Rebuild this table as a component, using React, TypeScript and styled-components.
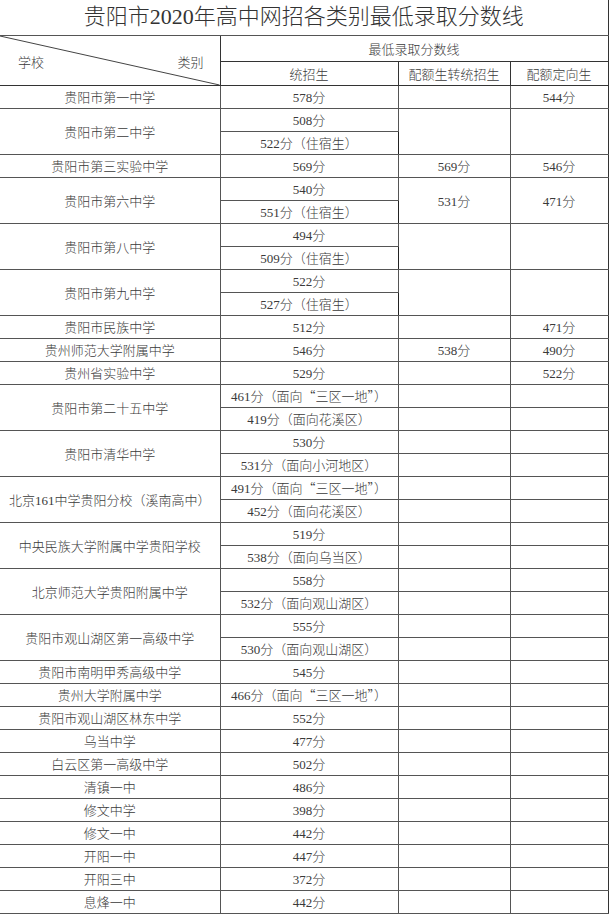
import styled, { createGlobalStyle } from "styled-components";

const GlobalStyle = createGlobalStyle`
  html, body {
    margin: 0;
    padding: 0;
    background: #ffffff;
  }
  body {
    font-family: "Liberation Serif", "Noto Sans CJK SC", serif;
    color: #333;
  }
`;

type Row = {
  school: string;
  scores: string[];
  transfer?: string;
  directed?: string;
};

const rows: Row[] = [
  { school: "贵阳市第一中学", scores: ["578分"], transfer: "", directed: "544分" },
  { school: "贵阳市第二中学", scores: ["508分", "522分（住宿生）"], transfer: "", directed: "" },
  { school: "贵阳市第三实验中学", scores: ["569分"], transfer: "569分", directed: "546分" },
  { school: "贵阳市第六中学", scores: ["540分", "551分（住宿生）"], transfer: "531分", directed: "471分" },
  { school: "贵阳市第八中学", scores: ["494分", "509分（住宿生）"], transfer: "", directed: "" },
  { school: "贵阳市第九中学", scores: ["522分", "527分（住宿生）"], transfer: "", directed: "" },
  { school: "贵阳市民族中学", scores: ["512分"], transfer: "", directed: "471分" },
  { school: "贵州师范大学附属中学", scores: ["546分"], transfer: "538分", directed: "490分" },
  { school: "贵州省实验中学", scores: ["529分"], transfer: "", directed: "522分" },
  { school: "贵阳市第二十五中学", scores: ["461分（面向“三区一地”）", "419分（面向花溪区）"] },
  { school: "贵阳市清华中学", scores: ["530分", "531分（面向小河地区）"] },
  { school: "北京161中学贵阳分校（溪南高中）", scores: ["491分（面向“三区一地”）", "452分（面向花溪区）"] },
  { school: "中央民族大学附属中学贵阳学校", scores: ["519分", "538分（面向乌当区）"] },
  { school: "北京师范大学贵阳附属中学", scores: ["558分", "532分（面向观山湖区）"] },
  { school: "贵阳市观山湖区第一高级中学", scores: ["555分", "530分（面向观山湖区）"] },
  { school: "贵阳市南明甲秀高级中学", scores: ["545分"] },
  { school: "贵州大学附属中学", scores: ["466分（面向“三区一地”）"] },
  { school: "贵阳市观山湖区林东中学", scores: ["552分"] },
  { school: "乌当中学", scores: ["477分"] },
  { school: "白云区第一高级中学", scores: ["502分"] },
  { school: "清镇一中", scores: ["486分"] },
  { school: "修文中学", scores: ["398分"] },
  { school: "修文一中", scores: ["442分"] },
  { school: "开阳一中", scores: ["447分"] },
  { school: "开阳三中", scores: ["372分"] },
  { school: "息烽一中", scores: ["442分"] },
];

// curly quotes are drawn full width in the original
const withQuotes = (text: string) =>
  text.split(/([“”])/).map((part, i) =>
    part === "“" || part === "”" ? <Quote key={i}>{part}</Quote> : part
  );

const App = () => {
  return (
    <>
      <GlobalStyle />
      <Sheet>
        <colgroup>
          <col style={{ width: 220 }} />
          <col style={{ width: 178 }} />
          <col style={{ width: 112 }} />
          <col style={{ width: 98 }} />
        </colgroup>
        <thead>
          <TitleRow>
            <Title colSpan={4}>贵阳市2020年高中网招各类别最低录取分数线</Title>
          </TitleRow>
          <HeadRow $h={26}>
            <CornerCell rowSpan={2}>
              <Diagonal viewBox="0 0 100 100" preserveAspectRatio="none">
                <line x1="0" y1="0" x2="100" y2="100" stroke="#444" strokeWidth="1" vectorEffect="non-scaling-stroke" />
              </Diagonal>
              <CornerLabels>
                <span>学校</span>
                <span>类别</span>
              </CornerLabels>
            </CornerCell>
            <HeadCell colSpan={3}>最低录取分数线</HeadCell>
          </HeadRow>
          <HeadRow $h={24}>
            <HeadCell>统招生</HeadCell>
            <HeadCell>配额生转统招生</HeadCell>
            <HeadCell $soft>配额定向生</HeadCell>
          </HeadRow>
        </thead>
        <tbody>
          {rows.map((row) => {
            const span = row.scores.length;
            // upper schools share one quota cell per school, the lower part is a plain grid
            const merged = row.transfer !== undefined;
            return row.scores.map((score, i) => (
              <BodyRow key={row.school + i}>
                {i === 0 && <Cell rowSpan={span}>{row.school}</Cell>}
                <Cell>{withQuotes(score)}</Cell>
                {merged && i === 0 && <Cell rowSpan={span}>{row.transfer}</Cell>}
                {merged && i === 0 && (
                  <Cell rowSpan={span} $soft>
                    {row.directed}
                  </Cell>
                )}
                {!merged && <Cell />}
                {!merged && <Cell $soft />}
              </BodyRow>
            ));
          })}
        </tbody>
      </Sheet>
    </>
  );
};

export default App;

const Sheet = styled.table`
  width: 608px;
  table-layout: fixed;
  border-collapse: collapse;
  font-size: 13px;
  font-weight: 300;
  color: #3a3a3a;
`;

const TitleRow = styled.tr`
  height: 35px;
`;

const Title = styled.th`
  padding: 0;
  font-size: 22px;
  font-weight: 300;
  text-align: center;
  color: #333;
  border-right: 1px solid #333;
  border-bottom: 1px solid #555;
  line-height: 34px;
`;

const HeadRow = styled.tr<{ $h: number }>`
  height: ${(p) => p.$h}px;
`;

const HeadCell = styled.th<{ $soft?: boolean }>`
  padding: 0;
  font-weight: 300;
  text-align: center;
  border: 1px solid #333;
  border-left-color: ${(p) => (p.$soft ? "#999" : "#333")};
`;

const CornerCell = styled.th`
  position: relative;
  padding: 0;
  font-weight: 300;
  border: 1px solid #333;
  border-left: none;
`;

const Diagonal = styled.svg`
  position: absolute;
  inset: 0;
  width: 100%;
  height: 100%;
`;

const CornerLabels = styled.div`
  display: flex;
  justify-content: space-between;
  padding: 2px 16px 0 18px;
`;

const BodyRow = styled.tr`
  height: 23px;
`;

const Cell = styled.td<{ $soft?: boolean }>`
  padding: 0;
  text-align: center;
  white-space: nowrap;
  border: 1px solid #555;
  border-left-color: ${(p) => (p.$soft ? "#999" : "#222")};

  &:first-child {
    border-left: none;
  }
  &:last-child {
    border-right-color: #333;
  }
`;

const Quote = styled.span`
  font-family: "Noto Sans CJK SC", sans-serif;
`;
